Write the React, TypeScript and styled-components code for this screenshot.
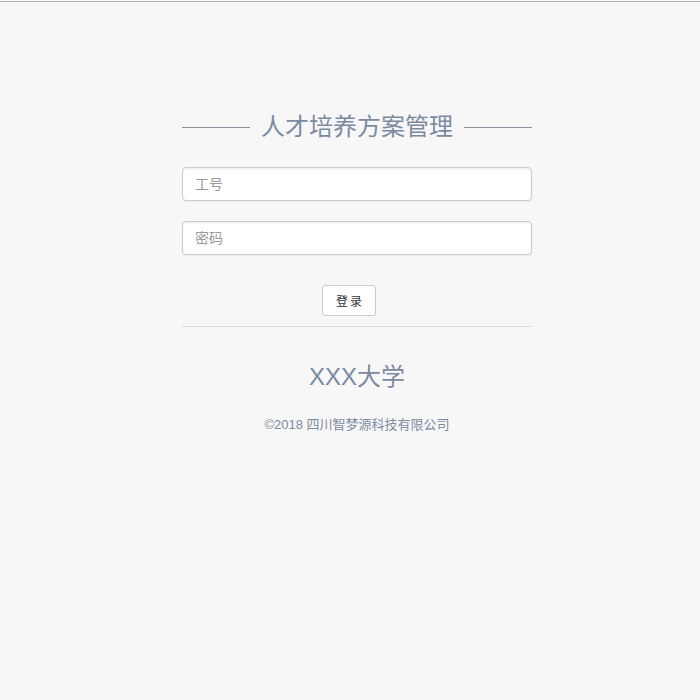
import React from "react";
import styled, { createGlobalStyle } from "styled-components";

const Global = createGlobalStyle`
  html, body { margin: 0; padding: 0; background: #f7f7f7; }
  body { font-family: "Liberation Sans", Arial, "Noto Sans CJK SC", sans-serif; }
`;

const Page = styled.div`
  min-height: 700px;
  box-sizing: border-box;
  padding-top: 1px;
`;

const TopRule = styled.div`
  height: 1px;
  background: #b3b3b3;
`;

const Panel = styled.div`
  width: 350px;
  padding-top: 109px;
  margin-left: 182px;
`;

const TitleRow = styled.div`
  display: flex;
  align-items: center;
  gap: 11px;
  height: 32px;
`;

const TitleLine = styled.div`
  flex: 1;
  height: 1px;
  background: #8a8f96;
`;

const Title = styled.h1`
  margin: 0;
  font-size: 24px;
  font-weight: normal;
  color: #7b8ba2;
  line-height: 32px;
  font-family: "Liberation Sans", "Noto Sans CJK SC", sans-serif;
`;

const Form = styled.div`
  display: flex;
  flex-direction: column;
  gap: 20px;
  margin-top: 24px;
`;

const Input = styled.input`
  box-sizing: border-box;
  width: 100%;
  height: 34px;
  padding: 6px 12px;
  font-size: 14px;
  font-family: "Liberation Sans", "Noto Sans CJK SC", sans-serif;
  background: #fff;
  border: 1px solid #ccc;
  border-radius: 4px;
  box-shadow: inset 0 1px 2px rgba(0, 0, 0, 0.075), 0 1px 2px rgba(0,0,0,0.06);
  outline: none;
  &::placeholder { color: #999; }
`;

const ButtonRow = styled.div`
  display: flex;
  justify-content: center;
  margin-top: 30px;
  padding-right: 16px;
`;

const Button = styled.button`
  width: 54px;
  height: 31px;
  padding: 0;
  font-size: 12px;
  font-family: "Liberation Sans", "Noto Sans CJK SC", sans-serif;
  color: #333;
  background: #fff;
  border: 1px solid #ccc;
  border-radius: 3px;
  letter-spacing: 2px;
  text-indent: 2px;
`;

const Divider = styled.hr`
  margin: 10px 0 0;
  border: 0;
  border-top: 1px solid #dcdcdc;
`;

const School = styled.div`
  margin-top: 35px;
  text-align: center;
  font-size: 24px;
  line-height: 30px;
  color: #7b8ba2;
`;

const Copy = styled.div`
  margin-top: 23px;
  text-align: center;
  font-size: 13px;
  line-height: 20px;
  color: #7b8ba2;
`;

export default function App() {
  return (
    <Page>
      <Global />
      <TopRule />
      <Panel>
        <TitleRow>
          <TitleLine />
          <Title>人才培养方案管理</Title>
          <TitleLine />
        </TitleRow>
        <Form>
          <Input placeholder="工号" />
          <Input type="password" placeholder="密码" />
        </Form>
        <ButtonRow>
          <Button>登录</Button>
        </ButtonRow>
        <Divider />
        <School>XXX大学</School>
        <Copy>©2018 四川智梦源科技有限公司</Copy>
      </Panel>
    </Page>
  );
}
